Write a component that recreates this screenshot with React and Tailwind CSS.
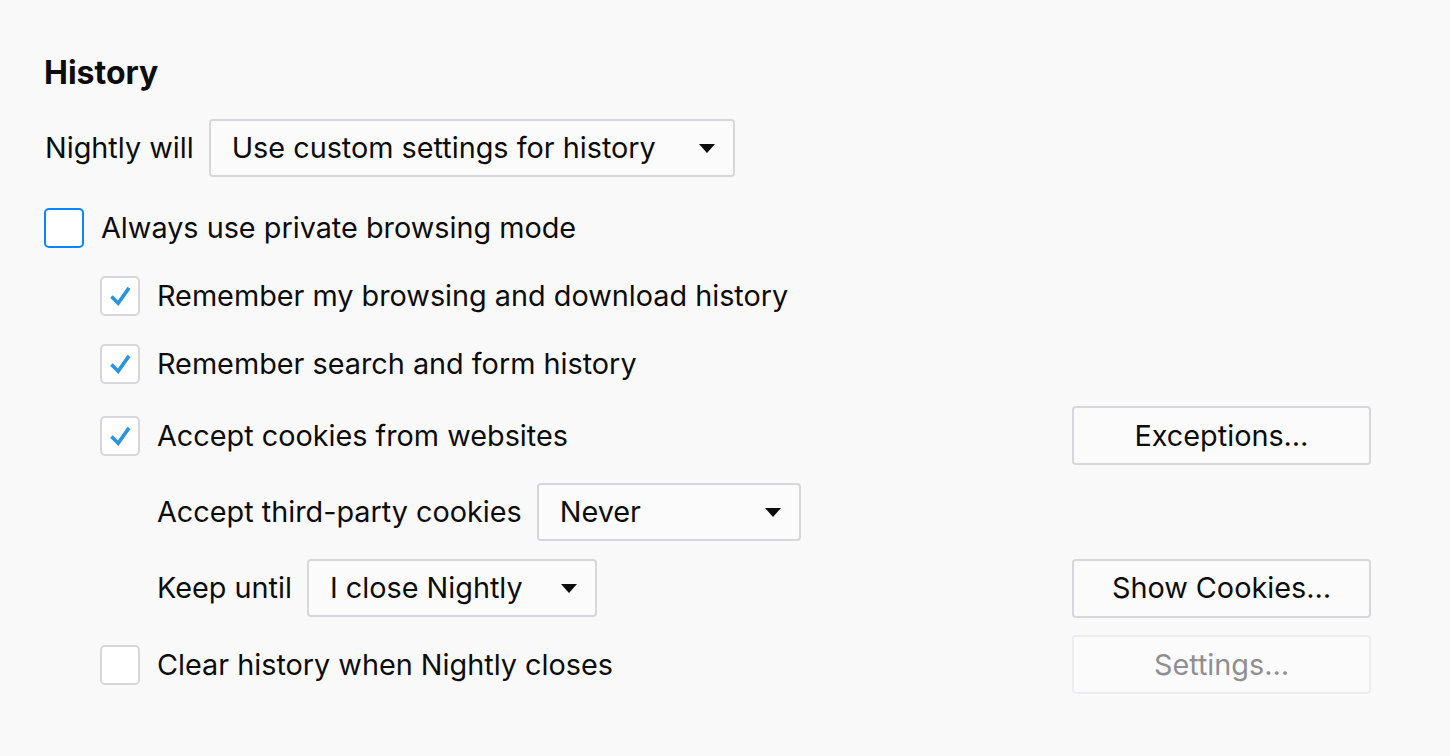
import React from "react";

function Arrow() {
  return (
    <svg width="16" height="9" viewBox="0 0 16 9" className="shrink-0">
      <path d="M0 0 L16 0 L8 9 Z" fill="#0c0c0d" />
    </svg>
  );
}

function Select({ label, width }) {
  return (
    <div
      className={`flex h-[58px] items-center justify-between rounded-[4px] border-2 border-[#d7d7db] bg-[#fbfbfb] pl-[21px] pr-[18px] ${width}`}
    >
      <span>{label}</span>
      <Arrow />
    </div>
  );
}

function Check({ checked, focused }) {
  return (
    <div
      className={`flex h-[40px] w-[40px] shrink-0 items-center justify-center rounded-[5px] border-2 bg-white ${
        focused ? "border-[#0a84ff]" : "border-[#d7d7db]"
      }`}
    >
      {checked && (
        <svg width="40" height="40" viewBox="0 0 40 40">
          <path
            d="M10.5 20.5 L18 28 L30 11"
            fill="none"
            stroke="#2a93dd"
            strokeWidth="4"
            strokeLinecap="butt"
            strokeLinejoin="miter"
          />
        </svg>
      )}
    </div>
  );
}

function Button({ children, disabled }) {
  return (
    <div
      className={`flex h-[59px] w-[299px] items-center justify-center rounded-[4px] border-2 bg-[#fbfbfb] ${
        disabled ? "border-[#ededf0] text-[#8f8f92]" : "border-[#d7d7db] text-[#0c0c0d]"
      }`}
    >
      {children}
    </div>
  );
}

export default function App() {
  return (
    <div
      className="min-h-[756px] w-[1450px] bg-[#f9f9fa] pl-[44px] pr-[79px] pt-[53px] text-[28.8px] text-[#0c0c0d]"
      style={{ fontFamily: "Inter, 'Noto Sans', sans-serif" }}
    >
      <h1 className="h-[40px] text-[32px] font-bold leading-[40px]">History</h1>

      <div className="mt-[26px] flex h-[58px] items-center">
        <span className="pl-[1px]">Nightly will</span>
        <div className="ml-[15px]">
          <Select label="Use custom settings for history" width="w-[526px]" />
        </div>
      </div>

      <div className="mt-[31px] flex h-[40px] items-center">
        <Check focused />
        <span className="ml-[17px]">Always use private browsing mode</span>
      </div>

      <div className="pl-[56px]">
        <div className="mt-[28px] flex h-[40px] items-center">
          <Check checked />
          <span className="ml-[17px]">Remember my browsing and download history</span>
        </div>

        <div className="mt-[28px] flex h-[40px] items-center">
          <Check checked />
          <span className="ml-[17px]">Remember search and form history</span>
        </div>

        <div className="mt-[22px] flex h-[59px] items-center justify-between">
          <div className="flex items-center">
            <Check checked />
            <span className="ml-[17px]">Accept cookies from websites</span>
          </div>
          <Button>Exceptions…</Button>
        </div>

        <div className="mt-[18px] flex h-[58px] items-center pl-[57px]">
          <span>Accept third-party cookies</span>
          <div className="ml-[15px]">
            <Select label="Never" width="w-[264px]" />
          </div>
        </div>

        <div className="mt-[18px] flex h-[58px] items-center justify-between">
          <div className="flex items-center pl-[57px]">
            <span>Keep until</span>
            <div className="ml-[15px]">
              <Select label="I close Nightly" width="w-[290px]" />
            </div>
          </div>
          <Button>Show Cookies…</Button>
        </div>

        <div className="mt-[18px] flex h-[59px] items-center justify-between">
          <div className="flex items-center">
            <Check />
            <span className="ml-[17px]">Clear history when Nightly closes</span>
          </div>
          <Button disabled>Settings…</Button>
        </div>
      </div>
    </div>
  );
}
